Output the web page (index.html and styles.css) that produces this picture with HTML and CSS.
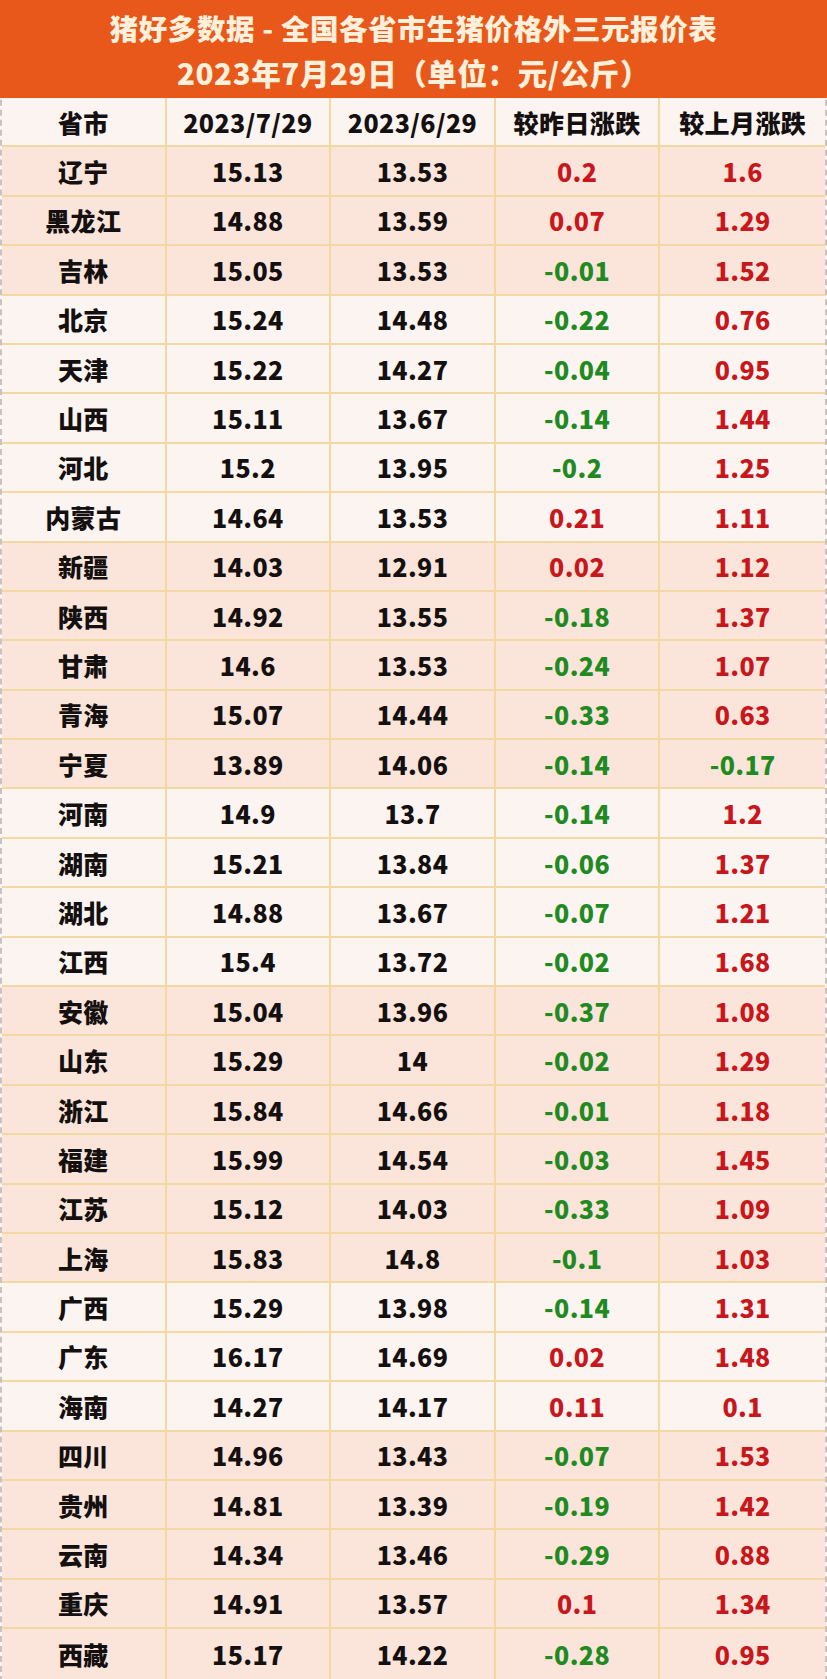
FILE: index.html
```html
<!DOCTYPE html>
<html lang="zh-CN">
<head>
<meta charset="utf-8">
<title>猪好多数据</title>
<link rel="stylesheet" href="styles.css">
</head>
<body>
<div class="sheet">
  <div class="title">
    <div class="t1">猪好多数据 - 全国各省市生猪价格外三元报价表</div>
    <div class="t2">2023年7月29日（单位：元/公斤）</div>
  </div>
  <div class="row light head"><div>省市</div><div>2023/7/29</div><div>2023/6/29</div><div>较昨日涨跌</div><div>较上月涨跌</div></div>
  <div class="row peach"><div>辽宁</div><div>15.13</div><div>13.53</div><div class="up">0.2</div><div class="up">1.6</div></div>
  <div class="row peach"><div>黑龙江</div><div>14.88</div><div>13.59</div><div class="up">0.07</div><div class="up">1.29</div></div>
  <div class="row peach"><div>吉林</div><div>15.05</div><div>13.53</div><div class="down">-0.01</div><div class="up">1.52</div></div>
  <div class="row light"><div>北京</div><div>15.24</div><div>14.48</div><div class="down">-0.22</div><div class="up">0.76</div></div>
  <div class="row light"><div>天津</div><div>15.22</div><div>14.27</div><div class="down">-0.04</div><div class="up">0.95</div></div>
  <div class="row light"><div>山西</div><div>15.11</div><div>13.67</div><div class="down">-0.14</div><div class="up">1.44</div></div>
  <div class="row light"><div>河北</div><div>15.2</div><div>13.95</div><div class="down">-0.2</div><div class="up">1.25</div></div>
  <div class="row light"><div>内蒙古</div><div>14.64</div><div>13.53</div><div class="up">0.21</div><div class="up">1.11</div></div>
  <div class="row peach"><div>新疆</div><div>14.03</div><div>12.91</div><div class="up">0.02</div><div class="up">1.12</div></div>
  <div class="row peach"><div>陕西</div><div>14.92</div><div>13.55</div><div class="down">-0.18</div><div class="up">1.37</div></div>
  <div class="row peach"><div>甘肃</div><div>14.6</div><div>13.53</div><div class="down">-0.24</div><div class="up">1.07</div></div>
  <div class="row peach"><div>青海</div><div>15.07</div><div>14.44</div><div class="down">-0.33</div><div class="up">0.63</div></div>
  <div class="row peach"><div>宁夏</div><div>13.89</div><div>14.06</div><div class="down">-0.14</div><div class="down">-0.17</div></div>
  <div class="row light"><div>河南</div><div>14.9</div><div>13.7</div><div class="down">-0.14</div><div class="up">1.2</div></div>
  <div class="row light"><div>湖南</div><div>15.21</div><div>13.84</div><div class="down">-0.06</div><div class="up">1.37</div></div>
  <div class="row light"><div>湖北</div><div>14.88</div><div>13.67</div><div class="down">-0.07</div><div class="up">1.21</div></div>
  <div class="row light"><div>江西</div><div>15.4</div><div>13.72</div><div class="down">-0.02</div><div class="up">1.68</div></div>
  <div class="row peach"><div>安徽</div><div>15.04</div><div>13.96</div><div class="down">-0.37</div><div class="up">1.08</div></div>
  <div class="row peach"><div>山东</div><div>15.29</div><div>14</div><div class="down">-0.02</div><div class="up">1.29</div></div>
  <div class="row peach"><div>浙江</div><div>15.84</div><div>14.66</div><div class="down">-0.01</div><div class="up">1.18</div></div>
  <div class="row peach"><div>福建</div><div>15.99</div><div>14.54</div><div class="down">-0.03</div><div class="up">1.45</div></div>
  <div class="row peach"><div>江苏</div><div>15.12</div><div>14.03</div><div class="down">-0.33</div><div class="up">1.09</div></div>
  <div class="row peach"><div>上海</div><div>15.83</div><div>14.8</div><div class="down">-0.1</div><div class="up">1.03</div></div>
  <div class="row light"><div>广西</div><div>15.29</div><div>13.98</div><div class="down">-0.14</div><div class="up">1.31</div></div>
  <div class="row light"><div>广东</div><div>16.17</div><div>14.69</div><div class="up">0.02</div><div class="up">1.48</div></div>
  <div class="row light"><div>海南</div><div>14.27</div><div>14.17</div><div class="up">0.11</div><div class="up">0.1</div></div>
  <div class="row peach"><div>四川</div><div>14.96</div><div>13.43</div><div class="down">-0.07</div><div class="up">1.53</div></div>
  <div class="row peach"><div>贵州</div><div>14.81</div><div>13.39</div><div class="down">-0.19</div><div class="up">1.42</div></div>
  <div class="row peach"><div>云南</div><div>14.34</div><div>13.46</div><div class="down">-0.29</div><div class="up">0.88</div></div>
  <div class="row peach"><div>重庆</div><div>14.91</div><div>13.57</div><div class="up">0.1</div><div class="up">1.34</div></div>
  <div class="row peach last"><div>西藏</div><div>15.17</div><div>14.22</div><div class="down">-0.28</div><div class="up">0.95</div></div>
</div>
</body>
</html>
```
FILE: styles.css
```css
html, body {
  margin: 0;
  padding: 0;
  background: #f4efec;
}
body {
  width: 827px;
  height: 1679px;
  overflow: hidden;
  font-family: "Noto Sans CJK SC", "Noto Sans", sans-serif;
  font-weight: 900;
}
.sheet {
  width: 827px;
  box-sizing: border-box;
  border-left: 2px dashed #c9c2be;
  border-right: 2px dashed #c9c2be;
  border-bottom: 3px dashed #c9c2be;
  background: #fcf5f1;
}
.title {
  background: #e8581a;
  color: #fff0dc;
  height: 98px;
  margin: 0 -2px;
  box-sizing: border-box;
  padding-top: 5px;
  text-align: center;
  font-size: 28.5px;
  line-height: 45px;
  letter-spacing: 0.6px;
}
.t2 {
  font-size: 29.5px;
}
.row {
  display: grid;
  grid-template-columns: 1fr 1fr 1fr 1fr 1fr;
  height: 49.4px;
  box-sizing: border-box;
  border-bottom: 2px solid #f3d8a2;
  font-size: 25px;
  letter-spacing: 0.4px;
  color: #141010;
}
.row.last {
  border-bottom: none;
}
.row > div {
  display: flex;
  align-items: center;
  justify-content: center;
  border-right: 2px solid #f3d8a2;
}
.row > div:last-child {
  border-right: none;
}
.light {
  background: #fcf4f0;
}
.peach {
  background: #fbe4d9;
}
.head > div {
  font-size: 25px;
}
.up {
  color: #c8171c;
}
.down {
  color: #1f8a22;
}
```
